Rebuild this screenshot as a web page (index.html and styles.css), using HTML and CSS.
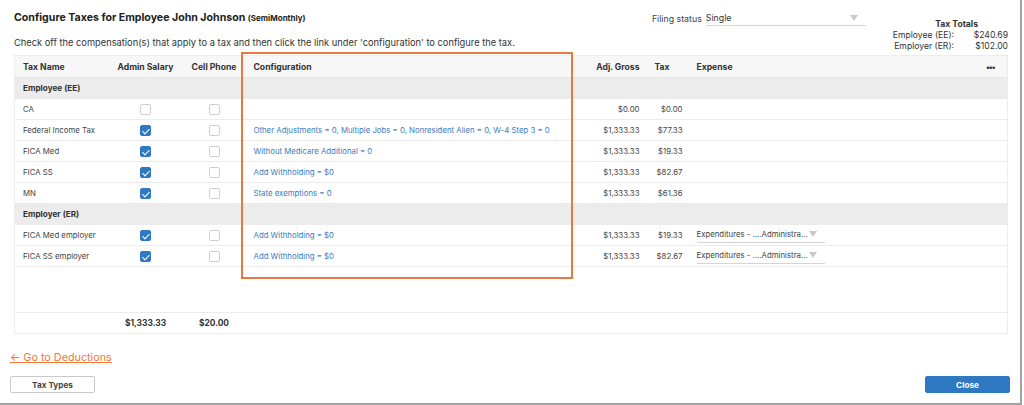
FILE: index.html
```html
<!doctype html>
<html lang="en">
<head>
    <meta charset="UTF-8">
    <title>Configure Taxes</title>
    <link rel="stylesheet" href="styles.css">
</head>
<body>
<div class="modal">
    <div class="modal-head">
        <div class="head-left">
            <h1 class="title">Configure Taxes for Employee John Johnson <small>(SemiMonthly)</small></h1>
            <p class="hint">Check off the compensation(s) that apply to a tax and then click the link under 'configuration' to configure the tax.</p>
        </div>
        <div class="head-right">
            <div class="filing">
                <span class="filing-label">Filing status</span>
                <span class="select filing-select">Single<i class="caret"></i></span>
            </div>
            <div class="totals">
                <div class="totals-title">Tax Totals</div>
                <div class="totals-row"><span>Employee (EE):</span><span>$240.69</span></div>
                <div class="totals-row"><span>Employer (ER):</span><span>$102.00</span></div>
            </div>
        </div>
    </div>

    <div class="table-wrap">
        <table class="tax-table">
            <colgroup>
                <col style="width:92px">
                <col style="width:78px">
                <col style="width:59px">
                <col style="width:334px">
                <col style="width:68px">
                <col style="width:43px">
                <col>
                <col style="width:34px">
            </colgroup>
            <thead>
            <tr>
                <th>Tax Name</th>
                <th class="c">Admin Salary</th>
                <th class="c">Cell Phone</th>
                <th class="cfg">Configuration</th>
                <th class="r">Adj. Gross</th>
                <th class="tax-h">Tax</th>
                <th class="exp">Expense</th>
                <th class="more">&bull;&bull;&bull;</th>
            </tr>
            </thead>
            <tbody>
            <tr class="group"><td colspan="8">Employee (EE)</td></tr>
            <tr>
                <td>CA</td>
                <td class="c"><span class="cb"></span></td>
                <td class="c"><span class="cb"></span></td>
                <td class="cfg"></td>
                <td class="r">$0.00</td>
                <td class="r">$0.00</td>
                <td></td><td></td>
            </tr>
            <tr>
                <td>Federal Income Tax</td>
                <td class="c"><span class="cb on"></span></td>
                <td class="c"><span class="cb"></span></td>
                <td class="cfg"><a href="#">Other Adjustments = 0, Multiple Jobs = 0, Nonresident Alien = 0, W-4 Step 3 = 0</a></td>
                <td class="r">$1,333.33</td>
                <td class="r">$77.33</td>
                <td></td><td></td>
            </tr>
            <tr>
                <td>FICA Med</td>
                <td class="c"><span class="cb on"></span></td>
                <td class="c"><span class="cb"></span></td>
                <td class="cfg"><a href="#">Without Medicare Additional = 0</a></td>
                <td class="r">$1,333.33</td>
                <td class="r">$19.33</td>
                <td></td><td></td>
            </tr>
            <tr>
                <td>FICA SS</td>
                <td class="c"><span class="cb on"></span></td>
                <td class="c"><span class="cb"></span></td>
                <td class="cfg"><a href="#">Add Withholding = $0</a></td>
                <td class="r">$1,333.33</td>
                <td class="r">$82.67</td>
                <td></td><td></td>
            </tr>
            <tr>
                <td>MN</td>
                <td class="c"><span class="cb on"></span></td>
                <td class="c"><span class="cb"></span></td>
                <td class="cfg"><a href="#">State exemptions = 0</a></td>
                <td class="r">$1,333.33</td>
                <td class="r">$61.36</td>
                <td></td><td></td>
            </tr>
            <tr class="group"><td colspan="8">Employer (ER)</td></tr>
            <tr>
                <td>FICA Med employer</td>
                <td class="c"><span class="cb on"></span></td>
                <td class="c"><span class="cb"></span></td>
                <td class="cfg"><a href="#">Add Withholding = $0</a></td>
                <td class="r">$1,333.33</td>
                <td class="r">$19.33</td>
                <td class="exp"><span class="select exp-select">Expenditures - ....Administra...<i class="caret"></i></span></td>
                <td></td>
            </tr>
            <tr>
                <td>FICA SS employer</td>
                <td class="c"><span class="cb on"></span></td>
                <td class="c"><span class="cb"></span></td>
                <td class="cfg"><a href="#">Add Withholding = $0</a></td>
                <td class="r">$1,333.33</td>
                <td class="r">$82.67</td>
                <td class="exp"><span class="select exp-select">Expenditures - ....Administra...<i class="caret"></i></span></td>
                <td></td>
            </tr>
            <tr class="filler"><td colspan="8"></td></tr>
            </tbody>
            <tfoot>
            <tr>
                <td></td>
                <td class="c">$1,333.33</td>
                <td class="c">$20.00</td>
                <td colspan="5"></td>
            </tr>
            </tfoot>
        </table>
        <div class="highlight"></div>
    </div>

    <a class="back-link" href="#">&larr; Go to Deductions</a>

    <div class="modal-foot">
        <button class="btn">Tax Types</button>
        <button class="btn btn-primary">Close</button>
    </div>
</div>
</body>
</html>
```

FILE: styles.css
```css
* {
    margin: 0;
    padding: 0;
    box-sizing: border-box;
}
body {
    background: #fff;
    font-family: Inter, "Liberation Sans", Arial, sans-serif;
    color: #333;
}
.modal {
    width: 1022px;
    height: 405px;
    border-right: 2px solid #a3a3a3;
    border-bottom: 2px solid #a3a3a3;
    background: #fff;
}
.modal-head {
    display: flex;
    justify-content: space-between;
    height: 55px;
    padding: 11px 12px 0 14px;
}
.title {
    font-size: 10.6px;
    font-weight: 700;
    color: #222;
    line-height: 14px;
}
.title small {
    font-size: 8px;
}
.hint {
    margin-top: 12px;
    font-size: 9.3px;
    color: #333;
}
.head-right {
    display: flex;
    align-items: flex-start;
}
.filing {
    display: flex;
    align-items: center;
    gap: 4px;
    margin-top: 0;
    margin-right: 27px;
    font-size: 8.8px;
}
.filing-label {
    color: #444;
}
.select {
    position: relative;
    display: inline-block;
    border-bottom: 1px solid #d4d4d4;
    color: #333;
}
.select .caret {
    position: absolute;
    right: 8px;
    top: 4px;
    border-left: 4px solid transparent;
    border-right: 4px solid transparent;
    border-top: 6px solid #c8c8c8;
}
.filing-select {
    width: 160px;
    height: 15px;
    line-height: 13px;
}
.totals {
    margin-top: 8px;
    font-size: 8.6px;
    line-height: 11px;
    color: #333;
}
.totals-title {
    font-weight: 700;
    text-align: right;
    padding-right: 30px;
}
.totals-row {
    display: flex;
    justify-content: flex-end;
    gap: 18px;
}
.totals-row span:last-child {
    width: 36px;
    text-align: right;
}
.table-wrap {
    position: relative;
    margin-left: 14px;
    width: 994px;
}
.tax-table {
    width: 100%;
    border-collapse: collapse;
    table-layout: fixed;
    border: 1px solid #ececec;
    font-size: 7.8px;
    color: #444;
}
.tax-table th {
    height: 22px;
    background: #f7f7f7;
    font-size: 8.6px;
    font-weight: 700;
    color: #333;
    text-align: left;
    padding: 0 8px;
    border-bottom: 1px solid #e8e8e8;
}
.tax-table td {
    height: 21px;
    padding: 0 8px;
    border-bottom: 1px solid #ececec;
    white-space: nowrap;
    overflow: hidden;
}
.tax-table .c {
    text-align: center;
    padding: 0;
}
.tax-table .r {
    text-align: right;
    padding-right: 6px;
}
.tax-table .cfg {
    padding-left: 10px;
}
.tax-table .tax-h {
    padding-left: 9px;
}
.tax-table .exp {
    padding-left: 8px;
}
.tax-table .more {
    text-align: center;
    font-size: 8px;
    letter-spacing: -1px;
}
.tax-table .group td {
    height: 21px;
    background: #ececec;
    font-weight: 700;
    font-size: 8.2px;
    color: #333;
}
.tax-table a {
    color: #3a7cc0;
    text-decoration: none;
}
.tax-table .filler td {
    height: 46px;
}
.tax-table tfoot td {
    height: 21px;
    font-size: 8.4px;
    font-weight: 700;
    color: #333;
    border-bottom: 0;
}
.cb {
    display: inline-block;
    width: 11px;
    height: 11px;
    border: 1px solid #cfcfcf;
    border-radius: 2px;
    background: #fff;
    vertical-align: middle;
    position: relative;
}
.cb.on {
    background: #2f78c2;
    border-color: #2f78c2;
}
.cb.on::after {
    content: "";
    position: absolute;
    left: 3px;
    top: 1px;
    width: 3px;
    height: 6px;
    border: solid #fff;
    border-width: 0 1.5px 1.5px 0;
    transform: rotate(45deg);
}
.exp-select {
    width: 128px;
    height: 16px;
    line-height: 14px;
    color: #444;
}
.highlight {
    position: absolute;
    left: 227px;
    top: -3px;
    width: 332px;
    height: 227px;
    border: 2px solid #e8783e;
    pointer-events: none;
}
.back-link {
    display: inline-block;
    margin: 17px 0 0 10px;
    font-size: 10.8px;
    color: #f0773a;
    text-decoration: underline;
}
.modal-foot {
    display: flex;
    justify-content: space-between;
    padding: 11px 10px 0 10px;
}
.btn {
    width: 85px;
    height: 17px;
    font-family: inherit;
    font-size: 8.2px;
    font-weight: 700;
    color: #444;
    background: #fff;
    border: 1px solid #c9c9c9;
    border-radius: 2px;
}
.btn-primary {
    background: #2f78c2;
    border-color: #2f78c2;
    color: #fff;
}
```
